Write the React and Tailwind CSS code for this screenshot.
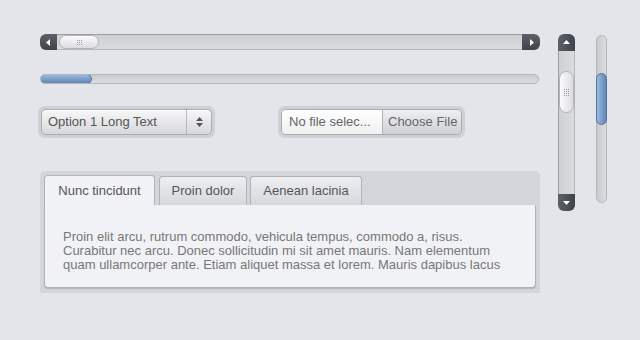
import React from "react";

const font = { fontFamily: '"Liberation Sans", Arial, sans-serif' };

function Grip({ cols = 3, rows = 3 }) {
  return (
    <div className="grid gap-[1px]" style={{ gridTemplateColumns: `repeat(${cols}, 1px)` }}>
      {Array.from({ length: cols * rows }).map((_, i) => (
        <span key={i} className="w-[1px] h-[1px] bg-[#9a9da3]" />
      ))}
    </div>
  );
}

function HScrollbar() {
  return (
    <div className="flex h-[16px] w-[500px]">
      <div className="w-[17px] h-full rounded-l-[6px] bg-gradient-to-b from-[#5c6068] to-[#3f434a] flex items-center justify-center">
        <svg width="5" height="7" viewBox="0 0 5 7"><path d="M4 0v7L0 3.5z" fill="#fff" /></svg>
      </div>
      <div className="flex-1 h-full bg-gradient-to-b from-[#cfd0d2] to-[#dadbdc] border-y border-t-[#9c9ea2] border-b-[#b5b7ba] flex items-center pl-[2px]">
        <div className="w-[40px] h-[14px] rounded-full bg-gradient-to-b from-[#fbfbfc] to-[#dcdde0] border border-[#b2b4b8] flex items-center justify-center">
          <Grip />
        </div>
      </div>
      <div className="w-[18px] h-full rounded-r-[6px] bg-gradient-to-b from-[#5c6068] to-[#3f434a] flex items-center justify-center">
        <svg width="5" height="7" viewBox="0 0 5 7"><path d="M1 0v7L5 3.5z" fill="#fff" /></svg>
      </div>
    </div>
  );
}

function Progress() {
  return (
    <div className="mt-[24px] w-[499px] h-[10px] rounded-full bg-gradient-to-b from-[#c9cacc] to-[#dcdddf] border border-[#b3b5b8] overflow-hidden">
      <div className="w-[52px] rounded-full bg-gradient-to-b from-[#9bbade] to-[#5f87b6] border border-[#4e739e] -mt-[1px] -ml-[1px] h-[10px]" />
    </div>
  );
}

function SelectBox() {
  return (
    <div className="-ml-[2px] p-[3px] rounded-[7px] bg-[#cdd0d5]">
      <div className="w-[171px] h-[26px] flex rounded-[5px] border border-[#a9abaf] bg-gradient-to-b from-[#f7f7f8] to-[#d7d8db] shadow-[inset_0_1px_0_#fff]">
        <div className="flex-1 flex items-center pl-[6px] text-[13px] text-[#555]">Option 1 Long Text</div>
        <div className="w-[25px] border-l border-[#b7b9bd] flex flex-col items-center justify-center gap-[2px]">
          <svg width="7" height="4" viewBox="0 0 7 4"><path d="M0 4L3.5 0L7 4z" fill="#555" /></svg>
          <svg width="7" height="4" viewBox="0 0 7 4"><path d="M0 0L3.5 4L7 0z" fill="#555" /></svg>
        </div>
      </div>
    </div>
  );
}

function FileBox() {
  return (
    <div className="ml-[63px] p-[3px] rounded-[7px] bg-[#cdd0d5]">
      <div className="w-[181px] h-[26px] flex rounded-[5px] border border-[#a9abaf] overflow-hidden">
        <div className="w-[100px] flex items-center pl-[7px] text-[13px] text-[#666] bg-gradient-to-b from-[#ffffff] to-[#eeeff1]">
          No file selec...
        </div>
        <div className="flex-1 border-l border-[#b1b3b7] flex items-center pl-[5px] text-[13px] text-[#666] bg-gradient-to-b from-[#eeeff1] to-[#cfd0d4]">
          Choose File
        </div>
      </div>
    </div>
  );
}

function Tabs() {
  const tabs = ["Nunc tincidunt", "Proin dolor", "Aenean lacinia"];
  return (
    <div className="mt-[33px] w-[500px] h-[122px] rounded-t-[5px] bg-[#d3d5da] pt-[4px] px-[4px] pb-[5px] flex flex-col">
      <div className="flex h-[30px] items-end">
        <div className="w-[111px] h-[30px] rounded-t-[4px] border border-b-0 border-[#b0b2b6] bg-[#f1f2f6] flex items-center justify-center text-[13px] text-[#555]">
          {tabs[0]}
        </div>
        <div className="ml-[4px] w-[88px] h-[29px] rounded-t-[4px] border border-b-0 border-[#b0b2b6] bg-gradient-to-b from-[#eceef1] to-[#d6d8dc] flex items-center justify-center text-[13px] text-[#555]">
          {tabs[1]}
        </div>
        <div className="ml-[3px] w-[112px] h-[29px] rounded-t-[4px] border border-b-0 border-[#b0b2b6] bg-gradient-to-b from-[#eceef1] to-[#d6d8dc] flex items-center justify-center text-[13px] text-[#555]">
          {tabs[2]}
        </div>
      </div>
      <div className="flex-1 bg-[#f1f2f6] rounded-b-[4px] border-x border-b border-[#b0b2b6] shadow-[0_1px_1px_rgba(0,0,0,0.15)] pl-[18px] pr-[10px] pt-[25px] text-[13px] leading-[14px] text-[#777]">
        Proin elit arcu, rutrum commodo, vehicula tempus, commodo a, risus.
        <br />
        Curabitur nec arcu. Donec sollicitudin mi sit amet mauris. Nam elementum
        <br />
        quam ullamcorper ante. Etiam aliquet massa et lorem. Mauris dapibus lacus
      </div>
    </div>
  );
}

function VScrollbar() {
  return (
    <div className="ml-[18px] w-[17px] h-[177px] flex flex-col">
      <div className="h-[17px] rounded-t-[6px] bg-gradient-to-r from-[#5c6068] to-[#3f434a] flex items-center justify-center">
        <svg width="7" height="5" viewBox="0 0 7 5"><path d="M0 4L3.5 0L7 4z" fill="#fff" /></svg>
      </div>
      <div className="flex-1 bg-gradient-to-r from-[#cfd0d2] to-[#dadbdc] border-x border-l-[#9c9ea2] border-r-[#b5b7ba] flex flex-col items-center pt-[20px]">
        <div className="w-[15px] h-[42px] rounded-full bg-gradient-to-r from-[#fbfbfc] to-[#dcdde0] border border-[#b2b4b8] flex items-center justify-center">
          <Grip rows={4} />
        </div>
      </div>
      <div className="h-[17px] rounded-b-[6px] bg-gradient-to-r from-[#5c6068] to-[#3f434a] flex items-center justify-center">
        <svg width="7" height="5" viewBox="0 0 7 5"><path d="M0 1L3.5 5L7 1z" fill="#fff" /></svg>
      </div>
    </div>
  );
}

function VSlider() {
  return (
    <div className="ml-[21px] mt-[1px] w-[11px] h-[168px] rounded-full bg-gradient-to-r from-[#c9cacc] to-[#dcdddf] border border-[#b3b5b8] pt-[37px]">
      <div className="-ml-[1px] w-[11px] h-[52px] rounded-full bg-gradient-to-r from-[#9bbade] to-[#5f87b6] border border-[#4e739e]" />
    </div>
  );
}

export default function App() {
  return (
    <div className="w-[640px] h-[340px] bg-[#e3e5ea] flex pt-[34px] pl-[40px]" style={font}>
      <div className="w-[500px] flex flex-col">
        <HScrollbar />
        <Progress />
        <div className="mt-[22px] flex">
          <SelectBox />
          <FileBox />
        </div>
        <Tabs />
      </div>
      <VScrollbar />
      <VSlider />
    </div>
  );
}
